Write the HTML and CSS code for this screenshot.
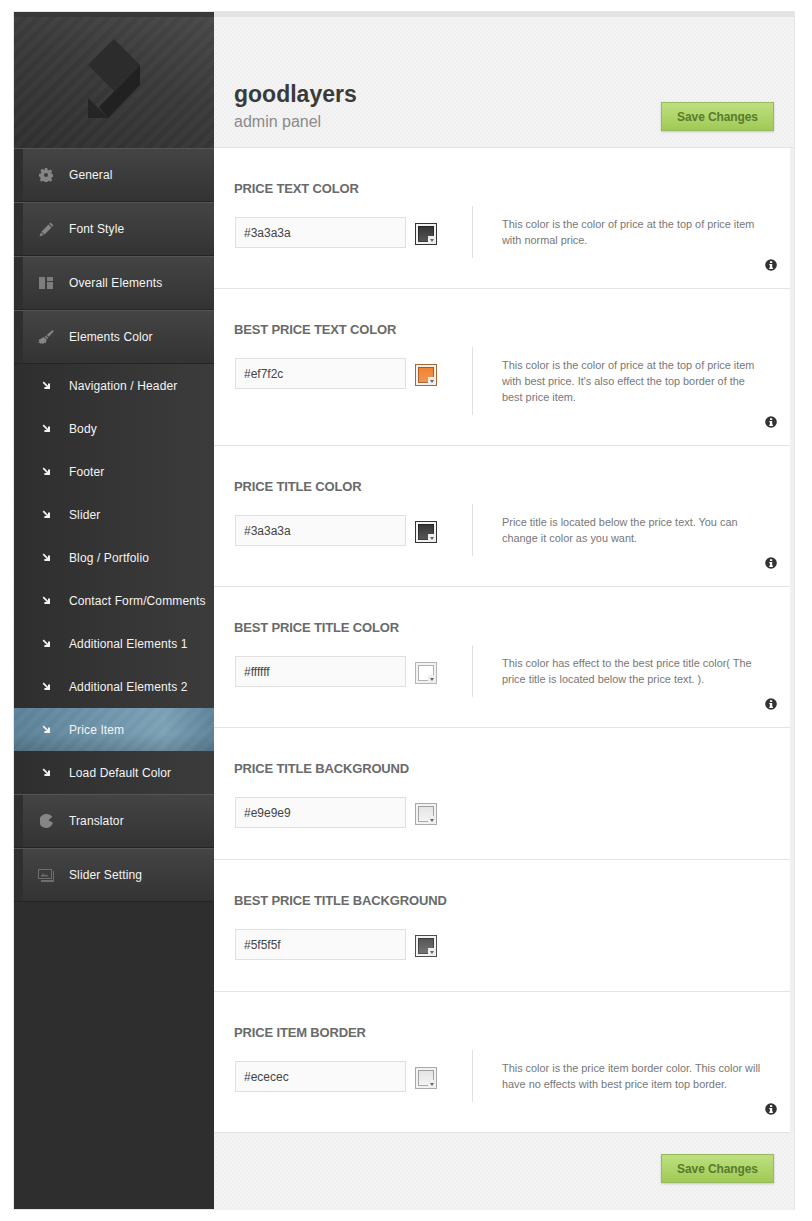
FILE: index.html
```html
<!DOCTYPE html>
<html lang="en">
<head>
<meta charset="utf-8">
<title>goodlayers admin panel</title>
<link rel="stylesheet" href="styles.css">
</head>
<body>
<svg class="defs" width="0" height="0" aria-hidden="true">
  <symbol id="i-arrow" viewBox="0 0 9 9"><path d="M0.6 1.800 L1.800 0.600 L6 4.800 L6 2.400 L8 2.400 L8 8 L2.400 8 L2.400 6 L4.800 6 Z" fill="#f2f2f2"/></symbol>
  <symbol id="i-info" viewBox="0 0 12 12"><circle cx="6" cy="6" r="5.800" fill="#333"/><path d="M5 2.200h2.200v1.700H5zM4.300 4.900h2.900v3.600h.7V10H4.300V8.500H5V6.300h-.7z" fill="#fff"/></symbol>
</svg>
<div class="shell">
  <aside class="sidebar">
    <div class="logo-box">
      <svg class="logo" width="52" height="79" viewBox="0 0 52 79" aria-label="logo">
        <path d="M26 0 L52 26 L26 52 L0 26 Z" fill="#2c2c2c"/>
        <path d="M52 26 L52 46 L20 79 L11 68 Z" fill="#212121"/>
        <path d="M0 59 L20 79 L0 79 Z" fill="#252525"/>
      </svg>
    </div>
    <nav>
      <a class="menu-item"><span class="menu-icon"><svg width="14" height="14" viewBox="0 0 14 14"><path fill="#858585" fill-rule="evenodd" d="M5.800 0h2.400l.4 1.800 1.300.6 1.600-1 1.700 1.700-1 1.600.6 1.300 1.800.4v2.400l-1.800.4-.6 1.300 1 1.600-1.700 1.700-1.600-1-1.300.6-.4 1.800H5.800l-.4-1.800-1.300-.6-1.600 1-1.700-1.700 1-1.600-.6-1.300L0 8.200V5.800l1.800-.4.6-1.300-1-1.600 1.700-1.700 1.600 1 1.300-.6zM7 5a2 2 0 1 0 0 4 2 2 0 0 0 0-4z"/></svg></span>General</a>
      <a class="menu-item"><span class="menu-icon"><svg width="15" height="15" viewBox="0 0 15 15"><path fill="#858585" d="M11.500 .5l3 3-1.300 1.300-3-3zM9.500 2.500l3 3L5.500 12.500l-3-3zM2 10.200l2.800 2.800L.5 14.500z"/></svg></span>Font Style</a>
      <a class="menu-item"><span class="menu-icon"><svg width="14" height="12" viewBox="0 0 14 12"><path fill="#7d7d7d" d="M0 0h6v12H0zM8 0h6v4H8zM8 5h6v7H8z"/></svg></span>Overall Elements</a>
      <a class="menu-item"><span class="menu-icon"><svg width="16" height="15" viewBox="0 0 16 15"><path fill="#858585" d="M14.500 0l1.300 1.200-5 5.600-2-1.700zM7.800 5.600l2.400 2.200-.9 1.100-2.600-2.100zM5.700 7l3 2.500L7.500 13.500l-1.300-.9-1 1.700-1.400-1.200-1.100 1-.9-1.300-1.800.2 1.400-1.700L.5 10z"/></svg></span>Elements Color</a>
      <a class="sub-item"><span class="menu-icon"><svg class="arrow" width="9" height="9"><use href="#i-arrow"/></svg></span>Navigation / Header</a>
      <a class="sub-item"><span class="menu-icon"><svg class="arrow" width="9" height="9"><use href="#i-arrow"/></svg></span>Body</a>
      <a class="sub-item"><span class="menu-icon"><svg class="arrow" width="9" height="9"><use href="#i-arrow"/></svg></span>Footer</a>
      <a class="sub-item"><span class="menu-icon"><svg class="arrow" width="9" height="9"><use href="#i-arrow"/></svg></span>Slider</a>
      <a class="sub-item"><span class="menu-icon"><svg class="arrow" width="9" height="9"><use href="#i-arrow"/></svg></span>Blog / Portfolio</a>
      <a class="sub-item"><span class="menu-icon"><svg class="arrow" width="9" height="9"><use href="#i-arrow"/></svg></span>Contact Form/Comments</a>
      <a class="sub-item"><span class="menu-icon"><svg class="arrow" width="9" height="9"><use href="#i-arrow"/></svg></span>Additional Elements 1</a>
      <a class="sub-item"><span class="menu-icon"><svg class="arrow" width="9" height="9"><use href="#i-arrow"/></svg></span>Additional Elements 2</a>
      <a class="sub-item sub-item--active"><span class="menu-icon"><svg class="arrow" width="9" height="9"><use href="#i-arrow"/></svg></span>Price Item</a>
      <a class="sub-item"><span class="menu-icon"><svg class="arrow" width="9" height="9"><use href="#i-arrow"/></svg></span>Load Default Color</a>
      <a class="menu-item"><span class="menu-icon"><svg width="13" height="14" viewBox="0 0 13 14"><path fill="#858585" d="M7 0a7 7 0 0 1 5.400 2.700L8.500 6.200 13 8.800A7 7 0 1 1 7 0z"/></svg></span>Translator</a>
      <a class="menu-item"><span class="menu-icon"><svg width="16" height="13" viewBox="0 0 16 13"><path fill="#6e6e6e" fill-rule="evenodd" d="M0 0h14v10H0zM1 1v8h12V1z"/><path fill="#6e6e6e" d="M2.500 7.500l2.500-3 2 2 1.500-1 2.500 2zM15 2h1v11H3v-2h12z"/></svg></span>Slider Setting</a>
    </nav>
  </aside>
  <main class="main">
    <header class="page-head">
      <div>
        <h1 class="brand">goodlayers</h1>
        <p class="tagline">admin panel</p>
      </div>
      <button class="save save--head" type="button">Save Changes</button>
    </header>

    <section class="option">
      <h2 class="option-title">PRICE TEXT COLOR</h2>
      <div class="option-row">
        <div class="field"><input class="color-input" value="#3a3a3a" readonly><span class="swatch swatch--dark"></span></div>
        <p class="desc">This color is the color of price at the top of price item with normal price.</p>
      </div>
      <svg class="info" width="12" height="12"><use href="#i-info"/></svg>
    </section>

    <section class="option">
      <h2 class="option-title">BEST PRICE TEXT COLOR</h2>
      <div class="option-row">
        <div class="field"><input class="color-input" value="#ef7f2c" readonly><span class="swatch swatch--orange"></span></div>
        <p class="desc">This color is the color of price at the top of price item with best price. It's also effect the top border of the best price item.</p>
      </div>
      <svg class="info" width="12" height="12"><use href="#i-info"/></svg>
    </section>

    <section class="option">
      <h2 class="option-title">PRICE TITLE COLOR</h2>
      <div class="option-row">
        <div class="field"><input class="color-input" value="#3a3a3a" readonly><span class="swatch swatch--dark"></span></div>
        <p class="desc">Price title is located below the price text. You can change it color as you want.</p>
      </div>
      <svg class="info" width="12" height="12"><use href="#i-info"/></svg>
    </section>

    <section class="option">
      <h2 class="option-title">BEST PRICE TITLE COLOR</h2>
      <div class="option-row">
        <div class="field"><input class="color-input" value="#ffffff" readonly><span class="swatch swatch--white"></span></div>
        <p class="desc">This color has effect to the best price title color( The price title is located below the price text. ).</p>
      </div>
      <svg class="info" width="12" height="12"><use href="#i-info"/></svg>
    </section>

    <section class="option option--plain">
      <h2 class="option-title">PRICE TITLE BACKGROUND</h2>
      <div class="option-row">
        <div class="field"><input class="color-input" value="#e9e9e9" readonly><span class="swatch swatch--light"></span></div>
      </div>
    </section>

    <section class="option option--plain">
      <h2 class="option-title">BEST PRICE TITLE BACKGROUND</h2>
      <div class="option-row">
        <div class="field"><input class="color-input" value="#5f5f5f" readonly><span class="swatch swatch--mid"></span></div>
      </div>
    </section>

    <section class="option">
      <h2 class="option-title">PRICE ITEM BORDER</h2>
      <div class="option-row">
        <div class="field"><input class="color-input" value="#ececec" readonly><span class="swatch swatch--light"></span></div>
        <p class="desc">This color is the price item border color. This color will have no effects with best price item top border.</p>
      </div>
      <svg class="info" width="12" height="12"><use href="#i-info"/></svg>
    </section>

    <footer class="page-foot">
      <button class="save" type="button">Save Changes</button>
    </footer>
  </main>
</div>
</body>
</html>
```
FILE: styles.css
```css
* { box-sizing: border-box; }
html, body { margin: 0; padding: 0; background: #fff; }
body { font-family: "Liberation Sans", Arial, sans-serif; }
.defs { position: absolute; }

.shell {
  display: flex;
  width: 782px;
  height: 1199px;
  margin: 11px 0 0 13px;
  border: 1px solid #e6e6e6;
}

/* Sidebar */
.sidebar {
  width: 200px;
  flex: none;
  background: #2e2e2e;
}
.logo-box {
  height: 136px;
  padding: 22px 0 0 74px;
  border-top: 5px solid #383838;
  background:
    repeating-linear-gradient(135deg, rgba(255,255,255,.018) 0 5px, rgba(0,0,0,.018) 5px 10px),
    linear-gradient(20deg, #303030 0%, #3a3a3a 55%, #484848 100%);
}
.logo { display: block; }

.menu-item, .sub-item {
  display: flex;
  align-items: center;
  color: #f4f4f4;
  font-size: 12px;
  letter-spacing: .12px;
  text-decoration: none;
}
.menu-icon {
  flex: none;
  display: flex;
  justify-content: center;
  align-items: center;
  width: 55px;
  padding-left: 9px;
}
.menu-item {
  height: 54px;
  border-top: 1px solid #555;
  border-bottom: 1px solid #242424;
  box-shadow: inset 9px 0 0 #2f2f2f;
  background: linear-gradient(#444, #333);
}
.sub-item {
  height: 43px;
  background:
    repeating-linear-gradient(135deg, rgba(255,255,255,.012) 0 1.414px, rgba(0,0,0,.045) 1.414px 2.828px),
    linear-gradient(90deg, #2e2e2e, #3c3c3c);
}
.sub-item--active {
  background:
    repeating-linear-gradient(135deg, rgba(255,255,255,.018) 0 5px, rgba(0,0,0,.018) 5px 10px),
    linear-gradient(rgba(0,0,0,0) 60%, rgba(0,0,0,.14)),
    linear-gradient(90deg, #5d8298, #7da2b7 75%, #5f8499);
}

/* Main column */
.main {
  width: 580px;
  flex: none;
  background: #f0f0f0;
}
.page-head, .page-foot {
  background: repeating-linear-gradient(135deg, #f5f5f5 0 1.414px, #eeeeee 1.414px 2.828px);
}
.page-head {
  display: flex;
  justify-content: space-between;
  align-items: flex-end;
  height: 136px;
  padding: 0 20px 15px;
  border-top: 5px solid #e3e3e3;
  border-bottom: 1px solid #e3e3e3;
}
.brand {
  margin: 0;
  color: #3a3a3a;
  font-size: 23px;
  font-weight: bold;
  line-height: 28px;
}
.tagline {
  margin: 4px 0 0;
  color: #8a8a8a;
  font-size: 16px;
  line-height: 20px;
}
.save {
  width: 113px;
  height: 29px;
  padding: 0;
  border: 1px solid #95bb5c;
  background: linear-gradient(#bde07f, #9fca56);
  box-shadow: 0 1px 2px rgba(0,0,0,.18);
  color: #5a7a2c;
  font-family: inherit;
  font-size: 12px;
  font-weight: bold;
  letter-spacing: -.1px;
}
.save--head { margin-bottom: 1px; }
.page-foot {
  display: flex;
  justify-content: flex-end;
  height: 77px;
  padding: 21px 20px 0;
}

/* Option sections */
.option {
  display: flow-root;
  margin-right: 4px;
  padding-top: 33px;
  background: #fff;
  border-bottom: 1px solid #e3e3e3;
}
.option--plain { padding-bottom: 30px; }
.option-title {
  margin: 0 0 9px 20px;
  color: #6a6a6a;
  font-size: 13px;
  font-weight: bold;
  letter-spacing: -.15px;
  line-height: 16px;
}
.option-row { display: flex; align-items: flex-start; }
.field {
  display: flex;
  align-items: flex-start;
  width: 258px;
  flex: none;
  padding: 11px 0 1px 21px;
}
.color-input {
  width: 171px;
  height: 31px;
  padding: 0 8px;
  border: 1px solid #e0e0e0;
  background: #fafafa;
  color: #444;
  font-family: inherit;
  font-size: 12px;
  outline: none;
}
.swatch {
  position: relative;
  width: 22px;
  height: 22px;
  margin: 6px 0 0 9px;
  border: 1px solid #333;
  box-shadow: inset 0 0 0 2px #f2f2f2, inset 0 0 0 3px rgba(0,0,0,.3);
  background: linear-gradient(#2f2f2f, #5c5c5c);
}
.swatch::after {
  content: "";
  position: absolute;
  right: 0;
  bottom: 0;
  width: 8px;
  height: 8px;
  background: #eee;
}
.swatch::before {
  content: "";
  position: absolute;
  z-index: 1;
  right: 2px;
  bottom: 2px;
  border: 2px solid transparent;
  border-top: 3px solid #666;
  border-bottom: 0;
}
.swatch--dark { border-color: #333; background: linear-gradient(#2f2f2f, #5c5c5c); }
.swatch--orange { border-color: #a9672f; background: linear-gradient(#ef7f2c, #f49a55); }
.swatch--white { border-color: #b5b5b5; background: #fff; }
.swatch--light { border-color: #aaa; background: linear-gradient(#e2e2e2, #f6f6f6); }
.swatch--mid { border-color: #4d4d4d; background: linear-gradient(#4f4f4f, #7a7a7a); }
.desc {
  width: 294px;
  margin: 0;
  padding: 10px 0 10px 29px;
  border-left: 1px solid #e0e0e0;
  color: #777;
  font-size: 10.9px;
  line-height: 16px;
}
.info {
  display: block;
  margin: 1px 13px 17px auto;
}
```
